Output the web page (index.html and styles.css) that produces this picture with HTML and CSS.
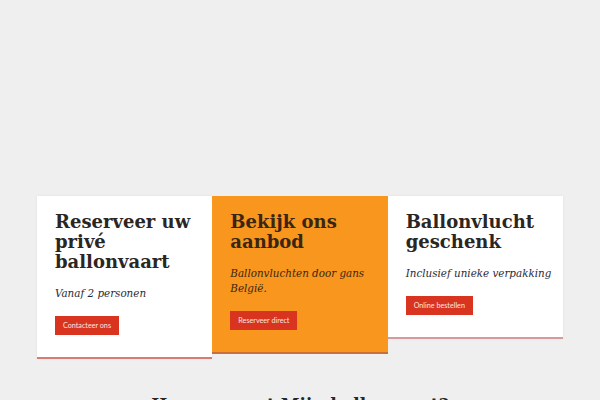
FILE: index.html
```html
<!DOCTYPE html>
<html lang="nl">
<head>
<meta charset="utf-8">
<title>Ballonvaart</title>
<link rel="stylesheet" href="styles.css">
</head>
<body>
<div class="hero"></div>
<section class="cards">
  <div class="card card-white card-1">
    <h3 class="card-title">Reserveer uw privé ballonvaart</h3>
    <p class="card-sub">Vanaf 2 personen</p>
    <a class="btn" href="#">Contacteer ons</a>
  </div>
  <div class="card card-orange card-2">
    <h3 class="card-title">Bekijk ons aanbod</h3>
    <p class="card-sub">Ballonvluchten door gans België.</p>
    <a class="btn" href="#">Reserveer direct</a>
  </div>
  <div class="card card-white card-3">
    <h3 class="card-title">Ballonvlucht geschenk</h3>
    <p class="card-sub">Inclusief unieke verpakking</p>
    <a class="btn" href="#">Online bestellen</a>
  </div>
</section>
<h2 class="section-title">Hoe verzorgt Mijn ballonvaart?</h2>
</body>
</html>
```
FILE: styles.css
```css
html, body {
  margin: 0;
  padding: 0;
}
body {
  background: #efefef;
  font-family: "Lato", "Liberation Sans", sans-serif;
  color: #2b2622;
  overflow: hidden;
  height: 400px;
}
.hero {
  height: 196px;
}
.cards {
  display: flex;
  align-items: flex-start;
  width: 526px;
  margin: 0 auto;
}
.card {
  flex: 1 1 0;
  box-sizing: border-box;
  padding: 16px 8px 22px 18px;
  border-bottom: 2px solid #d77c72;
}
.card-white {
  background: #ffffff;
  box-shadow: 0 0 3px rgba(0, 0, 0, 0.06);
}
.card-orange {
  background: #f8961d;
  border-bottom-color: #c9703a;
  position: relative;
  z-index: 1;
}
.card-3 {
  border-bottom-color: #d59a9c;
}
.card-title {
  margin: 0;
  font-family: "DejaVu Serif", serif;
  font-weight: bold;
  font-size: 18px;
  line-height: 20px;
  letter-spacing: 0;
  color: #2b2622;
}
.card-orange .card-title {
  color: #3a2612;
}
.card-sub {
  margin: 14px 0 0 0;
  font-family: "DejaVu Serif", serif;
  font-style: italic;
  font-stretch: condensed;
  font-size: 11.5px;
  line-height: 15px;
  color: #2c2a33;
}
.card-orange .card-sub {
  color: #3a2612;
}
.btn {
  display: inline-block;
  margin-top: 15px;
  height: 19px;
  line-height: 19px;
  padding: 0 8px;
  background: #d8341f;
  color: #fbe6e0;
  font-family: "Lato", sans-serif;
  font-size: 7.2px;
  text-decoration: none;
}
.section-title {
  margin: 33px 0 0 0;
  text-align: center;
  font-family: "DejaVu Serif", serif;
  font-weight: bold;
  font-size: 17px;
  line-height: 24px;
  color: #2b2622;
}
```
